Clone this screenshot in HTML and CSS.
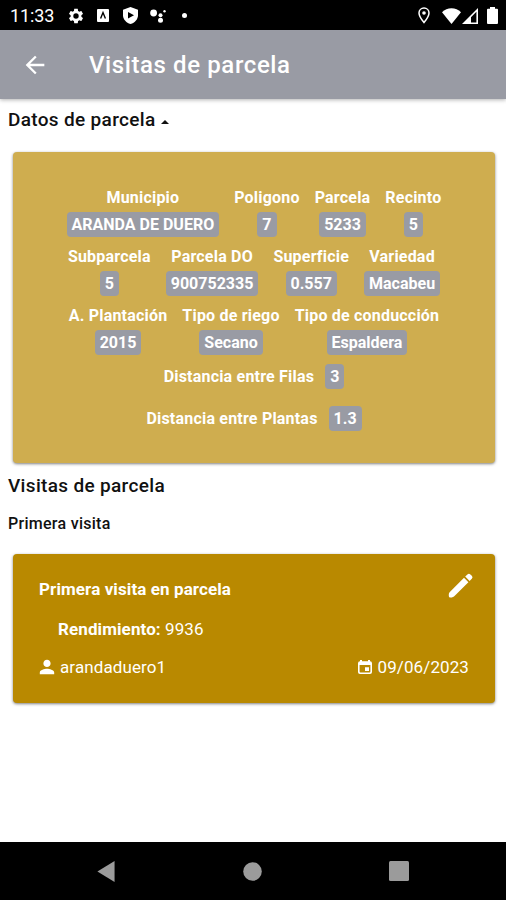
FILE: index.html
```html
<!DOCTYPE html>
<html lang="es">
<head>
<meta charset="utf-8">
<title>Visitas de parcela</title>
<link rel="stylesheet" href="styles.css">
</head>
<body>
  <div class="status">
    <span class="clock">11:33</span>
    <svg class="st-gear" width="18" height="18" viewBox="0 0 24 24"><path fill="#fff" d="M19.14 12.94c.04-.3.06-.61.06-.94 0-.32-.02-.64-.07-.94l2.03-1.58c.18-.14.23-.41.12-.61l-1.92-3.32c-.12-.22-.37-.29-.59-.22l-2.39.96c-.5-.38-1.03-.7-1.62-.94l-.36-2.54c-.04-.24-.24-.41-.48-.41h-3.84c-.24 0-.43.17-.47.41l-.36 2.54c-.59.24-1.13.57-1.62.94l-2.39-.96c-.22-.08-.47 0-.59.22L2.74 8.87c-.12.21-.08.47.12.61l2.03 1.58c-.05.3-.09.63-.09.94s.02.64.07.94l-2.03 1.58c-.18.14-.23.41-.12.61l1.92 3.32c.12.22.37.29.59.22l2.39-.96c.5.38 1.03.7 1.62.94l.36 2.54c.05.24.24.41.48.41h3.84c.24 0 .44-.17.47-.41l.36-2.54c.59-.24 1.13-.56 1.62-.94l2.39.96c.22.08.47 0 .59-.22l1.92-3.32c.12-.22.07-.47-.12-.61l-2.01-1.58zM12 15.6A3.6 3.6 0 1 1 12 8.4a3.6 3.6 0 0 1 0 7.2z"/></svg>
    <svg class="st-app" width="12" height="13" viewBox="0 0 12 13"><rect width="12" height="13" rx="1" fill="#fff"/><path d="M3.6 9.6 6 3.6l2.4 6" fill="none" stroke="#000" stroke-width="1.4"/></svg>
    <svg class="st-shield" width="15" height="17" viewBox="0 0 15 17"><path fill="#fff" d="M7.5 0 15 2.8v5.4c0 4-3 7.4-7.5 8.8C3 15.600 0 12.200 0 8.200V2.800z"/><path d="M5 5l6 3.300-6 3.300z"/></svg>
    <svg class="st-dots" width="16" height="14" viewBox="0 0 16 14"><g fill="#fff"><circle cx="3.600" cy="4" r="3.400"/><circle cx="10.500" cy="6.300" r="2"/><circle cx="10.500" cy="11.300" r="2.500"/><circle cx="14.500" cy="2.300" r="1.200"/></g></svg>
    <span class="dot"></span>
    <svg class="st-pin" width="12" height="17" viewBox="0 0 12 17"><path d="M6 1C3.200 1 1 3.200 1 6c0 3.600 5 9.500 5 9.500S11 9.600 11 6c0-2.800-2.200-5-5-5z" fill="none" stroke="#fff" stroke-width="1.500"/><circle cx="6" cy="6" r="1.800" fill="#fff"/></svg>
    <svg class="st-wifi" width="19" height="16" viewBox="0 0 19 16"><path fill="#fff" d="M9.500 16 0 4.200C5 -1.200 14 -1.200 19 4.200z"/></svg>
    <svg class="st-cell" width="16" height="16" viewBox="0 0 16 16"><path fill="#fff" fill-rule="evenodd" d="M16 0v16H0zM14.400 3.800 9 9.200v5.200h5.400z"/></svg>
    <svg class="st-batt" width="11" height="17" viewBox="0 0 11 17"><path fill="#fff" d="M3 0h5v1.800h2q1 0 1 1V16q0 1-1 1H1q-1 0-1-1V2.800q0-1 1-1h2z"/></svg>
  </div>

  <header class="appbar">
    <svg class="back" width="28" height="28" viewBox="0 0 24 24"><path fill="#fff" d="M20 11H7.830l5.590-5.590L12 4l-8 8 8 8 1.410-1.410L7.830 13H20v-2z"/></svg>
    <h1>Visitas de parcela</h1>
  </header>

  <main>
    <h2 class="toggle">Datos de parcela <span class="caret"></span></h2>

    <section class="card data">
      <div class="row">
        <div class="field"><b>Municipio</b><span class="badge">ARANDA DE DUERO</span></div>
        <div class="field"><b>Poligono</b><span class="badge">7</span></div>
        <div class="field"><b>Parcela</b><span class="badge">5233</span></div>
        <div class="field"><b>Recinto</b><span class="badge">5</span></div>
      </div>
      <div class="row">
        <div class="field"><b>Subparcela</b><span class="badge">5</span></div>
        <div class="field"><b>Parcela DO</b><span class="badge">900752335</span></div>
        <div class="field"><b>Superficie</b><span class="badge">0.557</span></div>
        <div class="field"><b>Variedad</b><span class="badge">Macabeu</span></div>
      </div>
      <div class="row">
        <div class="field"><b>A. Plantación</b><span class="badge">2015</span></div>
        <div class="field"><b>Tipo de riego</b><span class="badge">Secano</span></div>
        <div class="field"><b>Tipo de conducción</b><span class="badge">Espaldera</span></div>
      </div>
      <div class="line"><b>Distancia entre Filas</b><span class="badge">3</span></div>
      <div class="line"><b>Distancia entre Plantas</b><span class="badge">1.3</span></div>
    </section>

    <h2 class="visits">Visitas de parcela</h2>
    <h3>Primera visita</h3>

    <section class="card visit">
      <div class="visit-head">
        <b>Primera visita en parcela</b>
        <svg width="32" height="32" viewBox="0 0 32 32"><path fill="#fff" d="M4.600 23.200 19 8.800l4.400 4.400L9 27.600q-1 .8-2.200.8H5.300q-1.500 0-1.500-1.500v-1.500q0-1.300.8-2.200zM20.200 7.600l2.200-2.200q1.500-1.400 3 0l1.400 1.400q1.500 1.500 0 3L24.600 12z"/></svg>
      </div>
      <p class="yield"><b>Rendimiento:</b> 9936</p>
      <div class="visit-foot">
        <svg width="18" height="18" viewBox="0 0 24 24"><path fill="#fff" d="M12 12c2.210 0 4-1.790 4-4s-1.790-4-4-4-4 1.790-4 4 1.790 4 4 4zm0 2c-2.670 0-8 1.340-8 4v2h16v-2c0-2.660-5.330-4-8-4z" transform="translate(-2.400 -2.400) scale(1.200)"/></svg>
        <span class="user">arandaduero1</span>
        <svg width="16" height="16" viewBox="0 0 16 16"><path fill="#fff" fill-rule="evenodd" d="M3 1h2v1.200h6V1h2v1.200q2 .2 2 2V13q0 2-2 2H3q-2 0-2-2V4.200q0-1.800 2-2zM2.600 6v6.500q0 .9.900.9h9q.9 0 .9-.9V6zM8 8.300h4V12H8z"/></svg>
        <span class="date">09/06/2023</span>
      </div>
    </section>
  </main>

  <nav class="navbar">
    <svg width="18" height="21" viewBox="0 0 18 22"><path fill="#9b9b9b" d="M18 0v22L0 11z"/></svg>
    <svg width="19" height="19" viewBox="0 0 19 19"><circle cx="9.500" cy="9.500" r="9.300" fill="#9b9b9b"/></svg>
    <svg width="20" height="20" viewBox="0 0 20 20"><rect width="20" height="20" rx="1.500" fill="#9b9b9b"/></svg>
  </nav>
</body>
</html>
```
FILE: styles.css
```css
* {
  box-sizing: border-box;
}
body {
  margin: 0;
  height: 900px;
  display: flex;
  flex-direction: column;
  overflow: hidden;
  background: #fff;
  color: #111;
  font-family: Roboto, sans-serif;
}
svg {
  display: block;
  flex: none;
}
h1, h2, h3, p {
  margin: 0;
  font-weight: 500;
}
.status {
  flex: none;
  height: 30px;
  padding: 1px 8px 0 10px;
  display: flex;
  align-items: center;
  background: #000;
  color: #fff;
}
.clock {
  width: 57px;
  font-size: 18px;
  letter-spacing: -.1px;
}
.st-app { margin-left: 12px; }
.st-shield { margin-left: 14px; }
.st-dots { margin-left: 12px; }
.dot {
  width: 5px;
  height: 5px;
  margin-left: 16px;
  border-radius: 50%;
  background: #fff;
}
.st-pin { margin-left: auto; }
.st-wifi { margin-left: 12px; }
.st-cell { margin-left: 1px; }
.st-batt { margin-left: 9px; }
.appbar {
  flex: none;
  height: 69px;
  padding-left: 21px;
  display: flex;
  align-items: center;
  background: #999ba4;
  color: #fff;
  box-shadow: 0 1px 4px rgba(0, 0, 0, .3);
}
h1 {
  margin-left: 40px;
  font-size: 24px;
  letter-spacing: .6px;
}
main {
  flex: 1;
}
h2 {
  height: 24px;
  padding-left: 8px;
  font-size: 19px;
  line-height: 24px;
  letter-spacing: .33px;
}
.toggle {
  display: flex;
  align-items: center;
  margin-top: 9px;
}
.caret {
  margin: 4px 0 0 5px;
  border: 4.5px solid transparent;
  border-top: 0;
  border-bottom-color: #111;
}
.card {
  margin: 0 11px 0 13px;
  border-radius: 4px;
  color: #fff;
  box-shadow: 0 1px 3px rgba(0, 0, 0, .5);
}
.data {
  height: 311px;
  margin-top: 20px;
  padding-top: 36px;
  background: #cfad4f;
  font-size: 16px;
}
.data b {
  letter-spacing: .2px;
}
.row {
  height: 59px;
  display: flex;
  justify-content: center;
  gap: 15px;
}
.field {
  display: flex;
  flex-direction: column;
  align-items: center;
}
.field b {
  height: 24px;
  line-height: 20px;
}
.badge {
  height: 25px;
  padding: 0 5px;
  border-radius: 4px;
  background: #999ba4;
  font-weight: bold;
  line-height: 25px;
}
.line {
  height: 42px;
  display: flex;
  justify-content: center;
  gap: 11px;
  line-height: 25px;
}
.row + .line {
  margin-top: -1px;
}
.visits {
  margin-top: 11px;
}
h3 {
  margin-top: 16px;
  padding-left: 8px;
  font-size: 16px;
  line-height: 20px;
  letter-spacing: .28px;
}
.visit {
  height: 149px;
  margin-top: 20px;
  padding: 15px 18px 0 26px;
  background: #b98900;
  font-size: 17px;
}
.visit-head {
  height: 32px;
  display: flex;
  justify-content: space-between;
  line-height: 40px;
  letter-spacing: .1px;
}
.yield {
  margin-top: 17px;
  padding-left: 19px;
  font-weight: 400;
  line-height: 22px;
  letter-spacing: .1px;
}
.visit-foot {
  margin-top: 16px;
  padding-right: 8px;
  display: flex;
  align-items: center;
  line-height: 22px;
}
.visit-foot svg {
  margin-left: -1px;
}
.user {
  margin: 0 auto 0 4px;
  letter-spacing: .1px;
}
.date {
  margin-left: 5px;
  letter-spacing: .1px;
}
.navbar {
  flex: none;
  height: 58px;
  padding: 0 97px;
  display: flex;
  align-items: center;
  justify-content: space-between;
  background: #000;
}
```
